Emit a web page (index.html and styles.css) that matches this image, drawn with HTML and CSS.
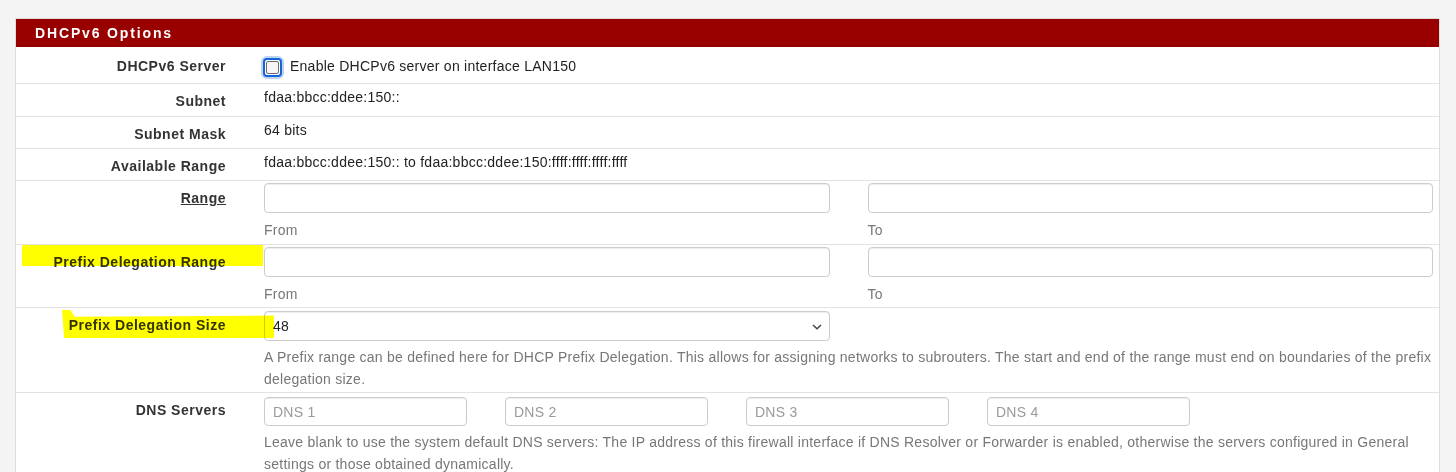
FILE: index.html
```html
<!DOCTYPE html>
<html>
<head>
<meta charset="utf-8">
<link rel="stylesheet" href="styles.css">
</head>
<body>
<div class="panel">
  <div class="panel-heading">DHCPv6 Options</div>

  <div class="row row-first">
    <div class="label">DHCPv6 Server</div>
    <div class="content check-content">
      <span class="cb"><span class="cb-inner"></span></span>
      <span class="cb-text">Enable DHCPv6 server on interface LAN150</span>
    </div>
  </div>

  <div class="row row-subnet">
    <div class="label">Subnet</div>
    <div class="content static">fdaa:bbcc:ddee:150::</div>
  </div>

  <div class="row">
    <div class="label">Subnet Mask</div>
    <div class="content static">64 bits</div>
  </div>

  <div class="row">
    <div class="label">Available Range</div>
    <div class="content static">fdaa:bbcc:ddee:150:: to fdaa:bbcc:ddee:150:ffff:ffff:ffff:ffff</div>
  </div>

  <div class="row">
    <div class="label"><span class="underline">Range</span></div>
    <div class="content halves">
      <div class="field"><input class="input" type="text"><div class="sub">From</div></div>
      <div class="field"><input class="input" type="text"><div class="sub">To</div></div>
    </div>
  </div>

  <div class="row row-pdr">
    <span class="hl hl-1"></span>
    <div class="label">Prefix Delegation Range</div>
    <div class="content halves">
      <div class="field"><input class="input" type="text"><div class="sub">From</div></div>
      <div class="field"><input class="input" type="text"><div class="sub">To</div></div>
    </div>
  </div>

  <div class="row row-pds">
    <div class="label">Prefix Delegation Size</div>
    <div class="content">
      <div class="halves">
        <div class="select-wrap">
          <select class="input select"><option>48</option></select>
          <svg class="chev" width="12" height="8" viewBox="0 0 12 8"><path d="M2 2 L6 5.8 L10 2" fill="none" stroke="#444" stroke-width="1.5"/></svg>
        </div>
      </div>
      <div class="help">A Prefix range can be defined here for DHCP Prefix Delegation. This allows for assigning networks to subrouters. The start and end of the range must end on boundaries of the prefix delegation size.</div>
    </div>
    <span class="hl hl-2"></span>
  </div>

  <div class="row">
    <div class="label">DNS Servers</div>
    <div class="content">
      <div class="dns">
        <input class="input" type="text" placeholder="DNS 1">
        <input class="input" type="text" placeholder="DNS 2">
        <input class="input" type="text" placeholder="DNS 3">
        <input class="input" type="text" placeholder="DNS 4">
      </div>
      <div class="help">Leave blank to use the system default DNS servers: The IP address of this firewall interface if DNS Resolver or Forwarder is enabled, otherwise the servers configured in General settings or those obtained dynamically.</div>
    </div>
  </div>
</div>
</body>
</html>
```
FILE: styles.css
```css
html, body {
  margin: 0;
  padding: 0;
}
body {
  background: #f4f4f4;
  font-family: "Liberation Sans", Arial, sans-serif;
  font-size: 14px;
  letter-spacing: 0.25px;
  color: #222;
  padding: 18px 0 0 15px;
  height: 472px;
  box-sizing: border-box;
  overflow: hidden;
}
.panel {
  width: 1425px;
  box-sizing: border-box;
  border: 1px solid #dddddd;
  border-bottom: none;
  background: #fff;
}
.panel-heading {
  background: #990000;
  color: #fff;
  font-weight: bold;
  font-size: 14px;
  letter-spacing: 1.85px;
  height: 28px;
  line-height: 28px;
  padding-left: 19px;
}
.row {
  position: relative;
  display: grid;
  grid-template-columns: 248px 1fr;
  border-bottom: 1px solid #e2e2e2;
}
.label {
  text-align: right;
  padding: 7px 38px 4px 0;
  line-height: 20px;
  font-weight: bold;
  color: #333;
  letter-spacing: 0.5px;
}
.row-first .label {
  padding-top: 9px;
  padding-bottom: 7px;
}
.row-subnet .label {
  padding-bottom: 5px;
}
.underline {
  text-decoration: underline;
}
.content {
  padding: 2px 6px 3px 0;
  min-width: 0;
}
.row-pdr .content {
  padding-bottom: 2px;
}
.row-pds .content {
  padding-bottom: 2px;
}
.static {
  padding-top: 3px;
  line-height: 20px;
}
.check-content {
  display: flex;
  align-items: center;
  padding-top: 6px;
  line-height: 20px;
}
.cb {
  width: 19px;
  height: 19px;
  flex: none;
  box-sizing: border-box;
  border: 2px solid #1565d8;
  border-radius: 4px;
  box-shadow: 0 0 0 2px #bcd3f2;
  display: flex;
  align-items: center;
  justify-content: center;
  margin-left: -1px;
  margin-top: 2px;
  background: #fff;
}
.cb-inner {
  width: 13px;
  height: 13px;
  box-sizing: border-box;
  border: 1px solid #6d6d6d;
  border-radius: 2px;
  background: #f6f6f6;
}
.cb-text {
  margin-left: 8px;
  margin-top: -2px;
  color: #222;
}
.halves {
  display: grid;
  grid-template-columns: 1fr 1fr;
  column-gap: 38px;
}
.input {
  display: block;
  width: 100%;
  height: 30px;
  box-sizing: border-box;
  border: 1px solid #cccccc;
  border-radius: 4px;
  box-shadow: inset 0 1px 1px rgba(0, 0, 0, 0.075);
  background: #fff;
  font-family: "Liberation Sans", Arial, sans-serif;
  font-size: 14px;
  letter-spacing: 0.25px;
  color: #333;
  padding: 0 8px;
  margin: 0;
  outline: none;
}
.input::placeholder {
  color: #9a9a9a;
}
.sub {
  color: #777;
  line-height: 22px;
  margin-top: 6px;
}
.select-wrap {
  position: relative;
  margin-top: 1px;
}
.select {
  appearance: none;
  -webkit-appearance: none;
  color: #222;
}
.chev {
  position: absolute;
  right: 7px;
  top: 12px;
  pointer-events: none;
}
.help {
  color: #777;
  line-height: 22px;
  margin-top: 5px;
}
.dns {
  display: grid;
  grid-template-columns: repeat(4, 203px);
  column-gap: 38px;
  margin-top: 2px;
}
.dns .input {
  height: 29px;
}
.hl {
  position: absolute;
  background: #ffff00;
  mix-blend-mode: multiply;
  pointer-events: none;
}
.hl-1 {
  left: 6px;
  top: 0;
  width: 241px;
  height: 21px;
}
.hl-2 {
  left: 46px;
  top: 2px;
  width: 212px;
  height: 28px;
  clip-path: polygon(0% 0%, 4% 0%, 6% 24%, 100% 20%, 100% 100%, 1% 100%);
}
```
